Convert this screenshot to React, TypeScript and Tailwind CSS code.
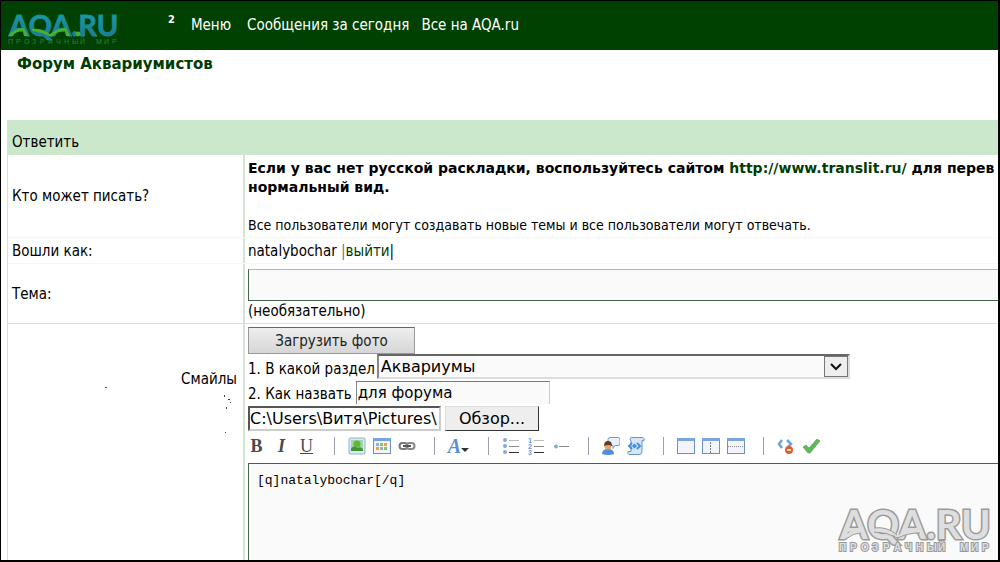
import type { ReactNode } from "react";

const navLinks = [
  { label: "Меню", href: "#menu", gap: "mr-4" },
  { label: "Сообщения за сегодня", href: "#today", gap: "mr-3" },
  { label: "Все на AQA.ru", href: "#all", gap: "" },
];

const SLOGAN = "ПРОЗРАЧНЫЙ МИР";
// the slogan is set wide, one step per letter under the wordmark
const sloganX = (start: number, step: number) =>
  SLOGAN.split("").map((_, i) => start + i * step).join(" ");

function Logo() {
  return (
    <svg viewBox="0 0 112 34" className="h-[34px] w-28 overflow-visible" role="img" aria-label="AQA.RU">
      <defs>
        <linearGradient id="sea" x1="0" y1="0" x2="0" y2="1">
          <stop offset="0.2" stopColor="#1c9aa0" />
          <stop offset="0.75" stopColor="#197f98" />
        </linearGradient>
      </defs>
      <text x="1" y="23" fontFamily="Lato" fontWeight="700" fontSize="29" fill="url(#sea)" stroke="#1a8c9c" strokeWidth="0.8">
        AQA.RU
      </text>
      <path
        d="M0 23 Q6 15 16 15 L20 23 H16 L15 18 Q9 18 4 23 Z M24 16 Q34 15 42 21 Q49 15 58 15 L62 23 H58 L57 18 Q50 18 43 24 Q34 19 24 18 Z"
        fill="#4bb02c"
      />
      <circle cx="70" cy="21" r="2.4" fill="#4bb02c" />
      <text x={sloganX(0, 8)} y="31" fontFamily="Liberation Sans" fontSize="7" fill="#36803a">
        {SLOGAN}
      </text>
    </svg>
  );
}

function Watermark() {
  return (
    <svg
      viewBox="0 0 154 50"
      className="pointer-events-none absolute right-1.5 bottom-1 h-[50px] w-[154px] overflow-visible"
      aria-hidden="true"
    >
      <g fill="#dedede" stroke="#9a9a9a" fontFamily="Lato" fontWeight="700" paintOrder="stroke">
        <text x="2" y="33" fontSize="40" strokeWidth="3">AQA.RU</text>
        {/* waves across the two A's and the tail of the Q */}
        <path
          d="M5 32 Q12 23 22 23 L24 27 Q16 27 9 32 Z M35 22 Q49 20 60 29 Q69 22 81 23 L83 27 Q72 26 62 32 Q50 26 36 26 Z"
          stroke="none"
        />
        <path d="M8 33 Q15 27 23 27 M36 22 Q49 20 59 29 M36 26 Q49 26 60 32 Q69 27 82 27" fill="none" />
        <text x={sloganX(1, 11)} y="45" fontSize="10" fontFamily="Liberation Sans" strokeWidth="2">
          {SLOGAN}
        </text>
      </g>
    </svg>
  );
}

function Icon({ children }: { children: ReactNode }) {
  return (
    <svg viewBox="0 0 18 18" className="size-[18px]" fill="none">
      {children}
    </svg>
  );
}

function Frame() {
  return (
    <>
      <rect x="0.5" y="1.5" width="17" height="15" fill="#f1f5fb" stroke="#6d8fc0" />
      <rect x="0" y="1" width="18" height="3" fill="#7ba3dc" />
    </>
  );
}

const icons: Record<string, ReactNode> = {
  Изображение: (
    <Icon>
      <rect x="1" y="1" width="16" height="16" rx="1" fill="#dbe9f7" stroke="#8fb0d2" />
      <rect x="3" y="3" width="12" height="11" fill="#9fd7a4" />
      <path d="M3 14v-3l4-2 3 2 2-1 3 2v2Z" fill="#3d9435" />
      <circle cx="9" cy="7" r="3.5" fill="#63b63d" />
    </Icon>
  ),
  Галерея: (
    <Icon>
      <Frame />
      <path d="M3 6h3v3H3zM7 10h3v3H7z" fill="#86b4e0" />
      <path d="M7 6h3v3H7zM11 10h3v3h-3z" fill="#8fc15b" />
      <path d="M11 6h3v3h-3zM3 10h3v3H3z" fill="#f0a13c" />
    </Icon>
  ),
  Ссылка: (
    <Icon>
      <rect x="1.5" y="6" width="8" height="6" rx="3" stroke="#777" strokeWidth="2" />
      <rect x="8.5" y="6" width="8" height="6" rx="3" stroke="#888" strokeWidth="2" />
      <path d="M5 9h8" stroke="#555" strokeWidth="2" />
    </Icon>
  ),
  Маркеры: (
    <Icon>
      <g fill="#82a9da">
        <circle cx="3" cy="3" r="2" />
        <circle cx="3" cy="9" r="2" />
        <circle cx="3" cy="15" r="2" />
      </g>
      <path d="M7 3.5h10" stroke="#bbb" />
      <path d="M7 9.5h10" stroke="#888" />
      <path d="M7 15.5h10" stroke="#333" />
    </Icon>
  ),
  Нумерация: (
    <Icon>
      <g fill="#6f9bd3" fontFamily="Liberation Sans" fontWeight="700" fontSize="7">
        <text x="1" y="6">1</text>
        <text x="1" y="12">2</text>
        <text x="1" y="18">3</text>
      </g>
      <path d="M7 3.5h10" stroke="#bbb" />
      <path d="M7 9.5h10" stroke="#888" />
      <path d="M7 15.5h10" stroke="#333" />
    </Icon>
  ),
  Пункт: (
    <Icon>
      <circle cx="4" cy="9.5" r="2" fill="#82a9da" />
      <path d="M7 9.5h10" stroke="#888" />
    </Icon>
  ),
  Цитата: (
    <Icon>
      <path d="M8 0.5h8q2 0 2 2v4q0 2-2 2h-3l-2 3v-3H8q-2 0-2-2v-4q0-2 2-2Z" fill="#e6f1fb" stroke="#6f9bc9" />
      <path d="M0 17q0-5 6-5t6 5q-6 2-12 0Z" fill="#4e8fd6" />
      <circle cx="6" cy="9" r="3.5" fill="#e0a372" />
      <path d="M2 9q0-5 4-5t4 5q-4-2-8 0Z" fill="#6b3a1d" />
    </Icon>
  ),
  Код: (
    <Icon>
      <path d="M4 .5h12q2 1 1 3h-2v11q0 3-3 3H2q-2-1-1-3h3V4Q2 3 4 .5Z" fill="#d4e6f8" stroke="#5f94cf" />
      <path d="M5 6L2 9l3 3M10 6l3 3-3 3" stroke="#4a90dd" strokeWidth="2" />
      <path d="M7.5 6.5L10 9l-2.5 2.5L5 9Z" fill="#3f8de0" />
    </Icon>
  ),
  Таблица: (
    <Icon>
      <Frame />
    </Icon>
  ),
  Столбцы: (
    <Icon>
      <Frame />
      <path d="M8.5 5v12" stroke="#777" strokeDasharray="2 1" />
    </Icon>
  ),
  Строки: (
    <Icon>
      <Frame />
      <path d="M1 9.5h16" stroke="#888" strokeDasharray="1 1" />
    </Icon>
  ),
  "Убрать код": (
    <Icon>
      <path d="M5 3L2 7l3 4M10 3l4 4-4 4" stroke="#6ba3de" strokeWidth="2.5" />
      <circle cx="12" cy="13" r="4" fill="#d9622b" />
      <path d="M10 13h4" stroke="#fff" strokeWidth="1.5" />
    </Icon>
  ),
  Проверить: (
    <Icon>
      <path d="M1 10l3-2 3 3 8-9 3 2L8 16H6Z" fill="#5fb85a" stroke="#388e3c" strokeWidth="0.5" />
    </Icon>
  ),
};

const toolGroups = [
  ["Изображение", "Галерея", "Ссылка"],
  ["font"],
  ["Маркеры", "Нумерация", "Пункт"],
  ["Цитата", "Код"],
  ["Таблица", "Столбцы", "Строки"],
  ["Убрать код", "Проверить"],
];

function Separator() {
  return (
    <span className="flex w-[25px] justify-end pr-[9px]">
      <span className="h-[18px] w-px bg-gray-400" />
    </span>
  );
}

function ToolButton({ name }: { name: string }) {
  if (name === "font") {
    return (
      <button type="button" aria-label="Шрифт" className="flex w-[29px] items-center justify-center">
        <span className="font-['Liberation_Serif'] text-[20px] leading-[18px] font-bold text-[#5c8fd4] italic">A</span>
        <svg viewBox="0 0 8 4" className="mt-2 h-1 w-2">
          <path d="M0 0h8L4 4Z" fill="#333" />
        </svg>
      </button>
    );
  }
  return (
    <button type="button" aria-label={name} className="flex w-[25px] justify-center">
      {icons[name]}
    </button>
  );
}

function Toolbar() {
  const letter = "w-[25px] font-['Liberation_Serif'] text-[18px] leading-[18px] text-[#4a4a4a]";
  return (
    <div className="-ml-1 flex h-8 shrink-0 items-center pb-0.5">
      <button type="button" className={`${letter} font-bold`}>B</button>
      <button type="button" className={`${letter} font-bold italic`}>I</button>
      <button type="button" className={`${letter} underline`}>U</button>
      {toolGroups.map((group) => (
        <div key={group[0]} className="flex items-center">
          <Separator />
          {group.map((name) => (
            <ToolButton key={name} name={name} />
          ))}
        </div>
      ))}
    </div>
  );
}

// Row of the reply form: caption on the left, content on the right
function Row({ label, className, children }: { label: ReactNode; className: string; children: ReactNode }) {
  return (
    <div className={`grid grid-cols-[237px_1fr] ${className}`}>
      <div className="relative flex items-center border-r-2 border-[#d5e3d7] px-1">{label}</div>
      <div className="flex min-w-0 flex-col pl-[3px]">{children}</div>
    </div>
  );
}

export default function App() {
  return (
    <div className="relative flex h-screen flex-col overflow-hidden border-t border-r-2 border-b-2 border-l border-black bg-white font-['DejaVu_Sans_Condensed','DejaVu_Sans',sans-serif] text-[15px] leading-5 text-black">
      <header className="flex h-[49px] shrink-0 items-center bg-[#004000] pl-[7px] text-white">
        <a href="#home" className="mt-2 mr-12">
          <Logo />
        </a>
        <sup className="mr-4 text-[11px] font-bold">2</sup>
        <nav className="flex pb-0.5">
          {navLinks.map((link) => (
            <a key={link.label} href={link.href} className={`whitespace-nowrap ${link.gap}`}>
              {link.label}
            </a>
          ))}
        </nav>
      </header>

      <h1 className="h-[70px] shrink-0 pt-1 pl-4 font-['DejaVu_Sans',sans-serif] text-[15px] font-bold text-[#003c00]">
        Форум Аквариумистов
      </h1>

      <form className="ml-1.5 flex min-h-0 flex-1 flex-col border-l border-[#cce8cc]">
        <h2 className="h-[35px] shrink-0 bg-[#cce8cc] px-1 pt-3">Ответить</h2>

        <Row label="Кто может писать?" className="h-[82px] shrink-0">
          <p className="pt-1 font-['DejaVu_Sans',sans-serif] text-[14px] leading-[19px] font-bold whitespace-nowrap">
            Если у вас нет русской раскладки, воспользуйтесь сайтом{" "}
            <a href="#translit" className="text-[#003c00]">http://www.translit.ru/</a> для перев
            <br />
            нормальный вид.
          </p>
          <p className="mt-auto pb-0.5 text-[14px]">
            Все пользователи могут создавать новые темы и все пользователи могут отвечать.
          </p>
        </Row>

        <Row label="Вошли как:" className="h-[27px] shrink-0 border-y border-[#f3faf3]">
          <p className="pt-[3px]">
            natalybochar <span className="text-gray-500">|</span>
            <a href="#logout" className="text-[#003c00]">выйти</a>|
          </p>
        </Row>

        <Row
          label={<label htmlFor="subject">Тема:</label>}
          className="h-[60px] shrink-0 border-b border-[#d5e3d7]"
        >
          <input
            id="subject"
            type="text"
            className="mt-[5px] h-8 w-full shrink-0 border border-r-0 border-[#456645] border-t-[#a5bfa5] bg-[#fafafa] px-1"
          />
          <p>(необязательно)</p>
        </Row>

        <Row
          className="min-h-0 flex-1"
          label={
            <div className="h-full w-full pt-[45px] pr-0.5 text-right">
              <label htmlFor="message">Смайлы</label>
              <svg viewBox="0 0 130 50" className="absolute top-[60px] right-2 h-[50px] w-[130px]" fill="#444">
                <path d="M0 3h2v1H0zM119 11h1v2h-1zM123 15h2v1h-2zM125 18h1v1h-1zM121 23h1v2h-1zM120 48h1v1h-1z" />
              </svg>
            </div>
          }
        >
          <button
            type="button"
            className="mt-[3px] h-[27px] w-[167px] shrink-0 border border-[#999] border-t-[#666] bg-linear-to-b from-[#eee] to-[#d6d6d6] text-[#222]"
          >
            Загрузить фото
          </button>
          <div className="flex h-[25px] shrink-0 items-end gap-0.5">
            <label htmlFor="section">1. В какой раздел</label>
            <div className="relative">
              <select
                id="section"
                className="block h-[25px] w-[473px] appearance-none border-2 border-[#ddd] border-t-[#666] border-l-[#888] bg-[#fafafa] px-0.5 font-['DejaVu_Sans',sans-serif] text-[16px] leading-5"
              >
                <option>Аквариумы</option>
              </select>
              <span className="pointer-events-none absolute top-0.5 right-0.5 flex h-[21px] w-6 items-center justify-center border border-[#777] bg-[#eee]">
                <svg viewBox="0 0 12 8" className="h-2 w-3" fill="none">
                  <path d="M1 1l5 5 5-5" stroke="#111" strokeWidth="2" />
                </svg>
              </span>
            </div>
          </div>
          <div className="flex h-[25px] shrink-0 items-end gap-1">
            <label htmlFor="photo-name">2. Как назвать</label>
            <input
              id="photo-name"
              type="text"
              defaultValue="для форума"
              className="h-[23px] w-[194px] border border-b-0 border-[#ccc] border-t-[#777] border-l-[#888] bg-[#fafafa] px-px font-['DejaVu_Sans',sans-serif]"
            />
          </div>
          <div className="flex h-[27px] shrink-0 items-end gap-1">
            <input
              type="text"
              readOnly
              aria-label="Файл"
              value="C:\Users\Витя\Pictures\"
              className="h-[25px] w-[193px] border-2 border-[#ccc] border-t-[#555] border-l-[#555] font-['DejaVu_Sans',sans-serif] text-[16px]"
            />
            <button
              type="button"
              className="h-[25px] w-[94px] border border-[#ddd] border-r-[#333] border-b-[#333] bg-[#eee] font-['DejaVu_Sans',sans-serif] text-[16px]"
            >
              Обзор...
            </button>
          </div>
          <Toolbar />
          <textarea
            id="message"
            defaultValue="[q]natalybochar[/q]"
            className="min-h-0 w-full flex-1 resize-none border border-r-0 border-b-0 border-[#456645] bg-[#fafafa] px-2 py-2 font-['Liberation_Mono',monospace] text-[13px] leading-[18px]"
          />
        </Row>
      </form>
      <Watermark />
    </div>
  );
}
